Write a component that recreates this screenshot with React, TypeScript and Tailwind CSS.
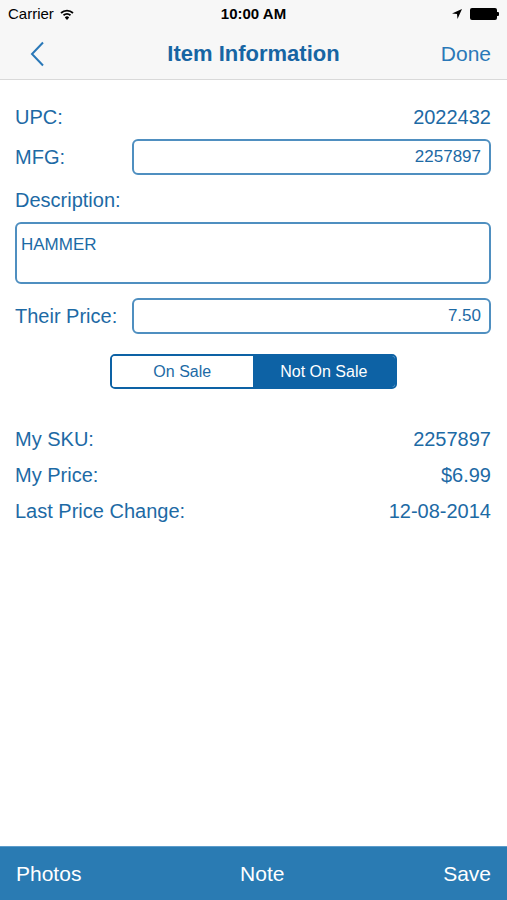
import React from "react";

const font = { fontFamily: '"Liberation Sans", Arial, sans-serif' };

function InfoRow({ label, value }: { label: string; value: string }) {
    return (
        <div className="flex h-[36px] items-center justify-between text-[20px] text-[#1d6aa5]">
            <span>{label}</span>
            <span>{value}</span>
        </div>
    );
}

function FieldBox({ value }: { value: string }) {
    return (
        <div className="flex h-[36px] flex-1 items-center justify-end rounded-[6px] border-2 border-[#4f8fc0] px-[8px] text-[17px] text-[#1d6aa5]">
            {value}
        </div>
    );
}

export default function App() {
    return (
        <div className="flex min-h-[900px] flex-col bg-white" style={font}>
            {/* Status bar */}
            <div className="flex h-[28px] items-center justify-between bg-[#f7f7f7] px-[8px] text-[15px] text-black">
                <div className="flex w-[120px] items-center gap-[6px]">
                    <span>Carrier</span>
                    <svg width="14" height="11" viewBox="0 0 14 11">
                        <path d="M1 4 A9 9 0 0 1 13 4" fill="none" stroke="#000" strokeWidth="1.8" />
                        <path d="M3.5 6.3 A5.5 5.5 0 0 1 10.5 6.3" fill="none" stroke="#000" strokeWidth="1.8" />
                        <path d="M7 11 L4.8 8.4 A3 3 0 0 1 9.2 8.4 Z" fill="#000" />
                    </svg>
                </div>
                <span className="font-semibold">10:00 AM</span>
                <div className="flex w-[120px] items-center justify-end gap-[8px]">
                    <svg width="10" height="10" viewBox="0 0 10 10">
                        <path d="M10 0 L0 4.5 L5 5 L5.5 10 Z" fill="#000" />
                    </svg>
                    <div className="flex items-center">
                        <div className="h-[12px] w-[27px] rounded-[2px] bg-black" />
                        <div className="h-[4px] w-[2px] rounded-r-[1px] bg-black" />
                    </div>
                </div>
            </div>

            {/* Nav bar */}
            <div className="flex h-[52px] items-center justify-between border-b border-[#d9d9d9] bg-[#f7f7f7] px-[16px]">
                <div className="w-[80px] pl-[14px]">
                    <svg width="16" height="26" viewBox="0 0 16 26">
                        <path d="M13 1.5 L2 13 L13 24.5" fill="none" stroke="#2a78b8" strokeWidth="2" />
                    </svg>
                </div>
                <h1 className="text-[22px] font-bold text-[#1765a3]">Item Information</h1>
                <div className="w-[80px] text-right text-[21px] text-[#2a78b8]">Done</div>
            </div>

            {/* Content */}
            <div className="flex flex-col pl-[15px] pr-[16px]">
                <div className="mt-[20px] flex h-[34px] items-center justify-between text-[20px] text-[#1d6aa5]">
                    <span>UPC:</span>
                    <span>2022432</span>
                </div>

                <div className="mt-[5px] flex items-center">
                    <span className="w-[117px] text-[20px] text-[#1d6aa5]">MFG:</span>
                    <FieldBox value="2257897" />
                </div>

                <div className="mt-[12px] flex h-[26px] items-center text-[20px] text-[#1d6aa5]">
                    Description:
                </div>

                <div className="mt-[9px] h-[62px] rounded-[6px] border-2 border-[#4f8fc0] px-[4px] pt-[8px] text-[17px] text-[#1d6aa5]">
                    HAMMER
                </div>

                <div className="mt-[14px] flex items-center">
                    <span className="w-[117px] text-[20px] text-[#1d6aa5]">Their Price:</span>
                    <FieldBox value="7.50" />
                </div>

                <div className="mt-[20px] flex justify-center">
                    <div className="flex h-[35px] w-[287px] overflow-hidden rounded-[5px] border-2 border-[#0d62a5] text-[16px]">
                        <div className="flex flex-1 items-center justify-center bg-white text-[#1d6aa5]">
                            On Sale
                        </div>
                        <div className="flex flex-1 items-center justify-center bg-[#0d62a5] text-white">
                            Not On Sale
                        </div>
                    </div>
                </div>

                <div className="mt-[32px]">
                    <InfoRow label="My SKU:" value="2257897" />
                    <InfoRow label="My Price:" value="$6.99" />
                    <InfoRow label="Last Price Change:" value="12-08-2014" />
                </div>
            </div>

            <div className="flex-1" />

            {/* Bottom toolbar */}
            <div className="flex h-[54px] items-center justify-between border-t border-[#5c9ccb] bg-[#2a7bb3] px-[16px] text-[21px] text-white">
                <span>Photos</span>
                <span>Note</span>
                <span>Save</span>
            </div>
        </div>
    );
}
